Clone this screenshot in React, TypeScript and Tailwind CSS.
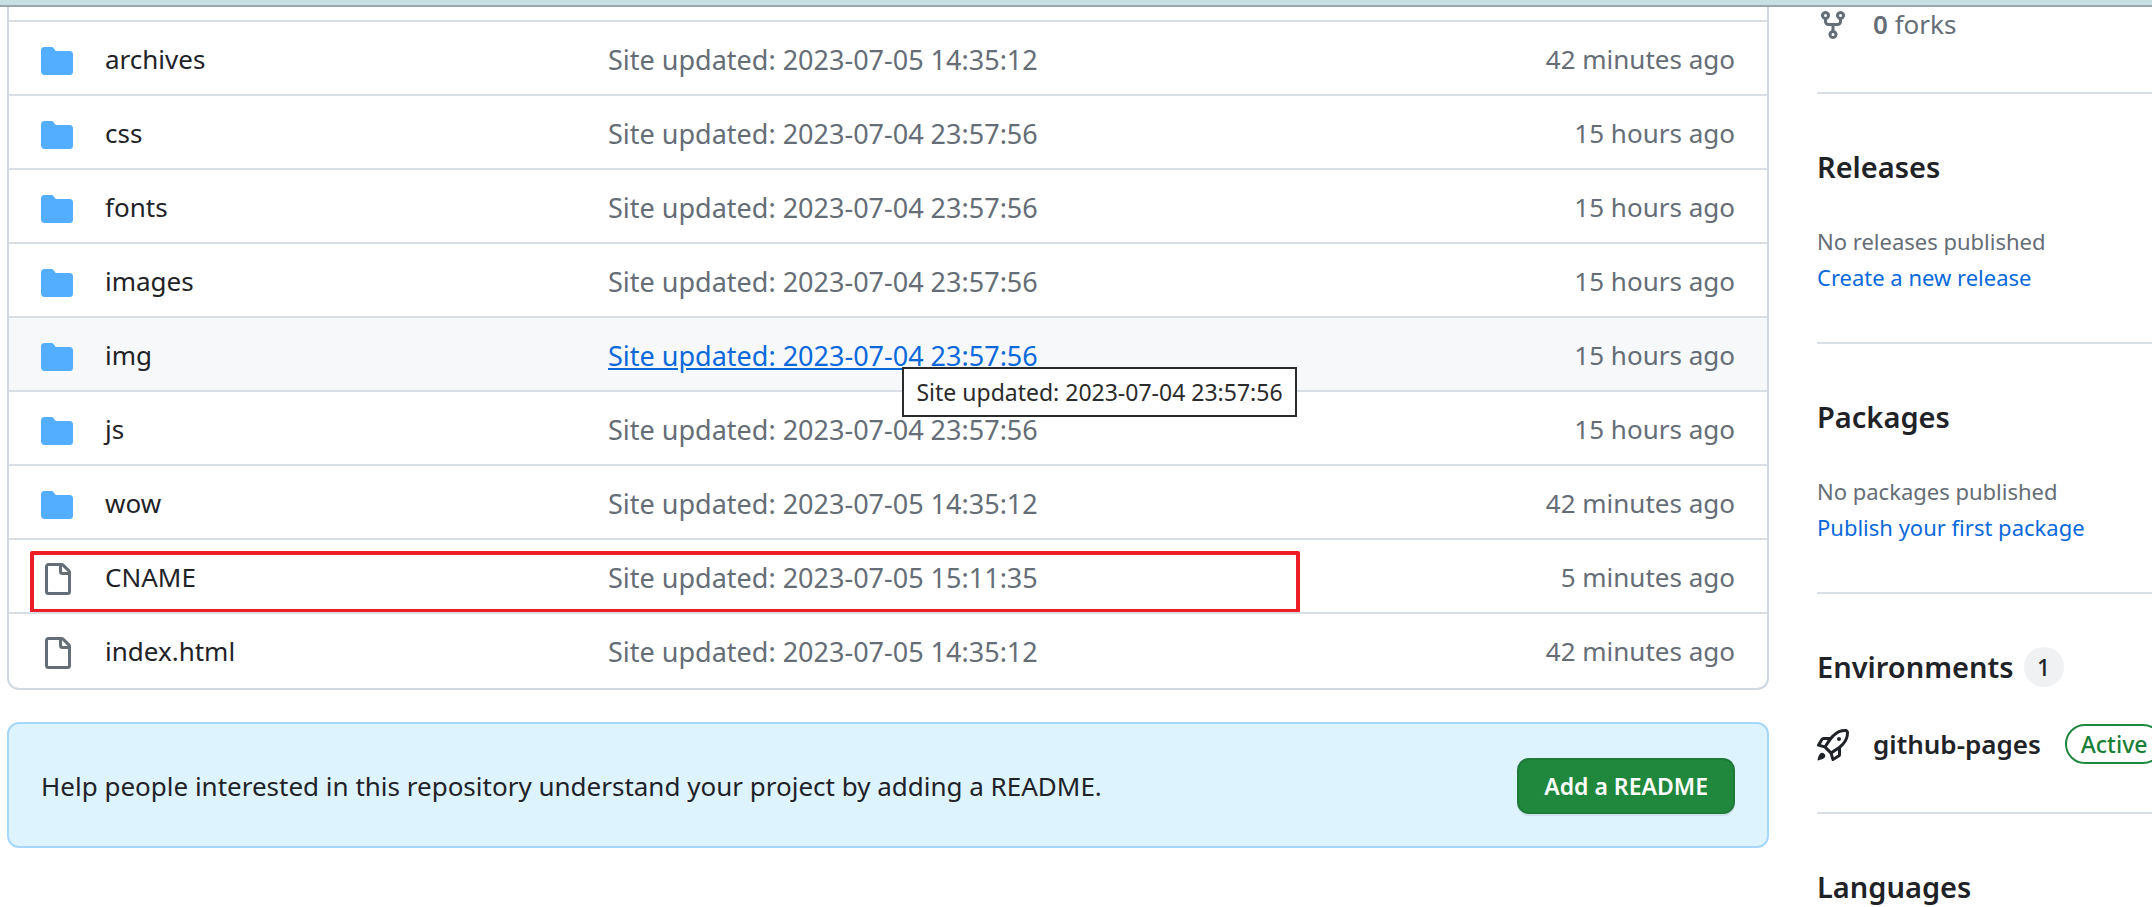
import type { ReactNode } from "react";

const ICONS = {
  folder:
    "M1.75 1A1.75 1.75 0 0 0 0 2.75v10.5C0 14.216.784 15 1.75 15h12.5A1.75 1.75 0 0 0 16 13.25v-8.5A1.75 1.75 0 0 0 14.25 3H7.5a.25.25 0 0 1-.2-.1l-.9-1.2C6.07 1.26 5.55 1 5 1H1.75Z",
  file: "M2 1.75C2 .784 2.784 0 3.75 0h6.586c.464 0 .909.184 1.237.513l2.914 2.914c.329.328.513.773.513 1.237v9.586A1.75 1.75 0 0 1 13.25 16h-9.5A1.75 1.75 0 0 1 2 14.25Zm1.75-.25a.25.25 0 0 0-.25.25v12.5c0 .138.112.25.25.25h9.5a.25.25 0 0 0 .25-.25V6h-2.75A1.75 1.75 0 0 1 9 4.25V1.5Zm6.75.062V4.25c0 .138.112.25.25.25h2.688l-.011-.013-2.914-2.914-.013-.011Z",
  fork: "M5 5.372v.878c0 .414.336.75.75.75h4.5a.75.75 0 0 0 .75-.75v-.878a2.25 2.25 0 1 1 1.5 0v.878a2.25 2.25 0 0 1-2.25 2.25h-1.5v2.128a2.251 2.251 0 1 1-1.5 0V8.5h-1.5A2.25 2.25 0 0 1 3.5 6.25v-.878a2.25 2.25 0 1 1 1.5 0ZM5 3.25a.75.75 0 1 0-1.5 0 .75.75 0 0 0 1.5 0Zm6.75.75a.75.75 0 1 0 0-1.5.75.75 0 0 0 0 1.5Zm-3 8.75a.75.75 0 1 0-1.5 0 .75.75 0 0 0 1.5 0Z",
  rocket:
    "M14.064 0h.186C15.216 0 16 .784 16 1.75v.186a8.752 8.752 0 0 1-2.564 6.186l-.458.459c-.314.314-.641.616-.979.904v3.207c0 .608-.315 1.172-.833 1.49l-2.774 1.707a.749.749 0 0 1-1.11-.418l-.954-3.102a1.214 1.214 0 0 1-.145-.125L3.754 9.816a1.218 1.218 0 0 1-.124-.145L.528 8.717a.749.749 0 0 1-.418-1.11l1.71-2.774A1.748 1.748 0 0 1 3.31 4h3.204c.288-.338.59-.665.904-.979l.459-.458A8.749 8.749 0 0 1 14.064 0ZM8.938 3.623h-.002l-.458.458c-.76.76-1.437 1.598-2.02 2.5l-1.5 2.317 2.143 2.143 2.317-1.5c.902-.583 1.74-1.26 2.499-2.02l.459-.458a7.25 7.25 0 0 0 2.123-5.127V1.75a.25.25 0 0 0-.25-.25h-.186a7.249 7.249 0 0 0-5.125 2.123ZM3.56 14.56c-.732.732-2.334 1.045-3.005 1.148a.234.234 0 0 1-.201-.064.234.234 0 0 1-.064-.201c.103-.671.416-2.273 1.15-3.003a1.502 1.502 0 1 1 2.12 2.12Zm6.94-3.935c-.088.06-.177.118-.266.175l-2.35 1.521.548 1.783 1.949-1.2a.25.25 0 0 0 .119-.213ZM3.678 8.116 5.2 5.766c.058-.09.117-.178.176-.266H3.309a.25.25 0 0 0-.213.119l-1.2 1.95ZM12 5a1 1 0 1 1-2 0 1 1 0 0 1 2 0Z",
};

function Icon({ name, className }: { name: keyof typeof ICONS; className: string }) {
  return (
    <svg viewBox="0 0 16 16" fill="currentColor" aria-hidden="true" className={`size-8 shrink-0 ${className}`}>
      <path d={ICONS[name]} />
    </svg>
  );
}

type Entry = {
  name: string;
  kind: "folder" | "file";
  message: string;
  age: string;
  hovered?: boolean;
  marked?: boolean;
};

const entries: Entry[] = [
  { name: "archives", kind: "folder", message: "Site updated: 2023-07-05 14:35:12", age: "42 minutes ago" },
  { name: "css", kind: "folder", message: "Site updated: 2023-07-04 23:57:56", age: "15 hours ago" },
  { name: "fonts", kind: "folder", message: "Site updated: 2023-07-04 23:57:56", age: "15 hours ago" },
  { name: "images", kind: "folder", message: "Site updated: 2023-07-04 23:57:56", age: "15 hours ago" },
  { name: "img", kind: "folder", message: "Site updated: 2023-07-04 23:57:56", age: "15 hours ago", hovered: true },
  { name: "js", kind: "folder", message: "Site updated: 2023-07-04 23:57:56", age: "15 hours ago" },
  { name: "wow", kind: "folder", message: "Site updated: 2023-07-05 14:35:12", age: "42 minutes ago" },
  { name: "CNAME", kind: "file", message: "Site updated: 2023-07-05 15:11:35", age: "5 minutes ago", marked: true },
  { name: "index.html", kind: "file", message: "Site updated: 2023-07-05 14:35:12", age: "42 minutes ago" },
];

function FileRow({ entry }: { entry: Entry }) {
  return (
    <tr className={entry.hovered ? "relative h-[74px] bg-[#f6f8fa]" : "relative h-[74px]"}>
      <td className="border-t-2 border-[#d8dee4] p-0 pt-[3px] pl-8">
        <div className="flex items-center gap-8">
          <Icon name={entry.kind} className={entry.kind === "folder" ? "mt-0.5 text-[#54aeff]" : "mt-0.5 text-[#656d76]"} />
          <a href="#" className="text-[#1f2328]">
            {entry.name}
          </a>
        </div>
        {entry.marked && (
          <span className="pointer-events-none absolute top-[13px] left-[21px] h-[62px] w-[1270px] rounded-xs border-4 border-[#ee1c25]" />
        )}
      </td>
      <td className="border-t-2 border-[#d8dee4] p-0 pt-[3px] text-[27px] leading-9">
        <a href="#" className={entry.hovered ? "text-[#0969da] underline" : "text-[#656d76]"}>
          {entry.message}
        </a>
        {entry.hovered && (
          <span
            role="tooltip"
            className="absolute top-[51px] left-[893px] z-10 flex h-[50px] w-[395px] items-center justify-center border-2 border-[#2b2b2b] bg-white text-[23px] text-[#2b2b2b]"
          >
            {entry.message}
          </span>
        )}
      </td>
      <td className="border-t-2 border-[#d8dee4] p-0 pt-[3px] pr-8 text-right text-[#656d76]">{entry.age}</td>
    </tr>
  );
}

function Section({ title, count, children }: { title: string; count?: number; children?: ReactNode }) {
  return (
    <section className="border-t-2 border-[#d8dee4] pt-[49px]">
      <h2 className="flex h-12 items-center gap-[10px] text-[29px] font-semibold">
        {title}
        {count !== undefined && (
          <span className="flex size-10 items-center justify-center rounded-full bg-[#eff1f3] text-[23px] font-medium">
            {count}
          </span>
        )}
      </h2>
      {children}
    </section>
  );
}

function EmptySection({ title, note, action }: { title: string; note: string; action: string }) {
  return (
    <Section title={title}>
      <div className="pt-8 pb-[47px] text-[22px] leading-9">
        <p className="text-[#656d76]">{note}</p>
        <a href="#" className="block text-[#0969da]">
          {action}
        </a>
      </div>
    </Section>
  );
}

export default function App() {
  return (
    <div className="flex h-screen flex-col overflow-hidden bg-white font-['Noto_Sans',sans-serif] text-[26px] whitespace-nowrap text-[#1f2328]">
      <div className="h-[7px] shrink-0 border-b-2 border-[#97a9ae] bg-[#c8e0e3]" />
      <div className="flex min-h-0 flex-1 gap-12 pl-[7px]">
        <main className="min-w-0 flex-1">
          <div className="rounded-b-xl border-2 border-t-0 border-[#d0d7de] pt-[13px] pb-[2px]">
            <table className="w-full table-fixed border-separate border-spacing-0">
              <colgroup>
                <col className="w-[599px]" />
                <col />
                <col className="w-[300px]" />
              </colgroup>
              <tbody>
                {entries.map((entry) => (
                  <FileRow key={entry.name} entry={entry} />
                ))}
              </tbody>
            </table>
          </div>
          <div className="mt-8 flex h-[126px] items-center justify-between rounded-xl border-2 border-[#a6d8ff] bg-[#ddf4ff] px-8 pt-0.5">
            <p>Help people interested in this repository understand your project by adding a README.</p>
            <button
              type="button"
              className="h-14 rounded-xl border-2 border-[#1f7a38] bg-[#1f883d] px-[25px] text-[23px] font-semibold text-white shadow-[0_2px_0_rgba(31,35,40,0.1)]"
            >
              Add a README
            </button>
          </div>
        </main>
        <aside className="w-[335px] shrink-0">
          <a href="#" className="flex h-[85px] items-start gap-6 pt-0.5 leading-[30px] text-[#656d76]">
            <Icon name="fork" className="" />
            <span>
              <strong className="font-semibold">0</strong> forks
            </span>
          </a>
          <EmptySection title="Releases" note="No releases published" action="Create a new release" />
          <EmptySection title="Packages" note="No packages published" action="Publish your first package" />
          <Section title="Environments" count={1}>
            <div className="flex h-[121px] items-start pt-[33px]">
              <Icon name="rocket" className="mt-[5px]" />
              <a href="#" className="ml-6 leading-10 font-semibold">
                github-pages
              </a>
              <span className="ml-6 flex h-10 items-center rounded-full border-2 border-[#1f883d] px-[14px] text-[23px] font-medium text-[#1a7f37]">
                Active
              </span>
            </div>
          </Section>
          <Section title="Languages" />
        </aside>
      </div>
    </div>
  );
}
